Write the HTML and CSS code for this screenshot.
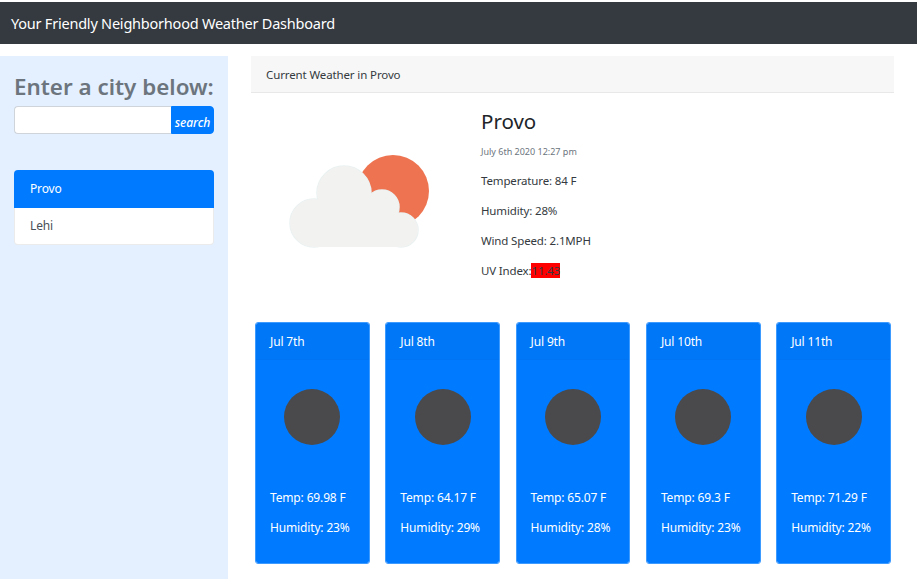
FILE: index.html
```html
<!DOCTYPE html>
<html>
<head lang="en">
    <meta charset="UTF-8">
    <title>Weather Dashboard</title>
    <link rel="stylesheet" href="styles.css">
</head>
<body>
    <nav class="navbar">Your Friendly Neighborhood Weather Dashboard</nav>
    <div class="page">
        <aside class="sidebar">
            <h2 class="search-title">Enter a city below:</h2>
            <form class="search">
                <input type="text" class="search-input">
                <button type="button" class="search-btn">search</button>
            </form>
            <ul class="cities">
                <li class="active">Provo</li>
                <li>Lehi</li>
            </ul>
        </aside>
        <main class="main">
            <div class="current-header">Current Weather in Provo</div>
            <section class="current">
                <div class="current-icon">
                    <svg width="230" height="200" viewBox="251 93 230 200">
                        <circle cx="393" cy="191" r="36" fill="#ee7350"/>
                        <g fill="#f2f2f1" stroke="#e9f1f1" stroke-width="1.5">
                            <circle cx="344" cy="193" r="27"/>
                            <circle cx="382" cy="207" r="17"/>
                            <circle cx="401" cy="230" r="17"/>
                            <circle cx="314" cy="223" r="24"/>
                        </g>
                        <g fill="#f2f2f1">
                            <circle cx="344" cy="193" r="27"/>
                            <circle cx="382" cy="207" r="17"/>
                            <circle cx="401" cy="230" r="17"/>
                            <circle cx="314" cy="223" r="24"/>
                            <rect x="314" y="215" width="87" height="32"/>
                            <rect x="340" y="205" width="45" height="20"/>
                        </g>
                    </svg>
                </div>
                <div class="current-info">
                    <h3 class="city">Provo</h3>
                    <p class="date">July 6th 2020 12:27 pm</p>
                    <p>Temperature: 84 F</p>
                    <p>Humidity: 28%</p>
                    <p>Wind Speed: 2.1MPH</p>
                    <p>UV Index:<span class="uv">11.43</span></p>
                </div>
            </section>
            <section class="forecast">
                <div class="day">
                    <div class="day-header">Jul 7th</div>
                    <div class="day-body">
                        <div class="dot"></div>
                        <p>Temp: 69.98 F</p>
                        <p>Humidity: 23%</p>
                    </div>
                </div>
                <div class="day">
                    <div class="day-header">Jul 8th</div>
                    <div class="day-body">
                        <div class="dot"></div>
                        <p>Temp: 64.17 F</p>
                        <p>Humidity: 29%</p>
                    </div>
                </div>
                <div class="day">
                    <div class="day-header">Jul 9th</div>
                    <div class="day-body">
                        <div class="dot"></div>
                        <p>Temp: 65.07 F</p>
                        <p>Humidity: 28%</p>
                    </div>
                </div>
                <div class="day">
                    <div class="day-header">Jul 10th</div>
                    <div class="day-body">
                        <div class="dot"></div>
                        <p>Temp: 69.3 F</p>
                        <p>Humidity: 23%</p>
                    </div>
                </div>
                <div class="day">
                    <div class="day-header">Jul 11th</div>
                    <div class="day-body">
                        <div class="dot"></div>
                        <p>Temp: 71.29 F</p>
                        <p>Humidity: 22%</p>
                    </div>
                </div>
            </section>
        </main>
    </div>
</body>
</html>
```

FILE: styles.css
```css
*{
    margin: 0;
    padding: 0;
    box-sizing: border-box;
}
ul{
    list-style: none;
}
html,body{
    height: 100%;
    overflow: hidden;
}
body{
    font-family: "Noto Sans", sans-serif;
    font-size: 12px;
    line-height: 18px;
    letter-spacing: -0.15px;
    color: #212529;
    background: #fff;
    padding-top: 2px;
}
.navbar{
    height: 42px;
    background: #343a40;
    color: #fff;
    font-size: 14.5px;
    letter-spacing: -0.22px;
    line-height: 42px;
    padding-left: 11px;
}
.page{
    display: flex;
    margin-top: 12px;
}
.sidebar{
    width: 228px;
    height: 523px;
    background: #e4f0ff;
    padding: 16px 14px 0;
}
.search-title{
    font-size: 22.4px;
    line-height: 30px;
    font-weight: 600;
    letter-spacing: 0;
    color: #6c757d;
    white-space: nowrap;
}
.search{
    display: flex;
    width: 200px;
    height: 28px;
    margin-top: 4px;
}
.search-input{
    flex: 1;
    min-width: 0;
    border: 1px solid #ced4da;
    border-right: 0;
    border-radius: 4px 0 0 4px;
    background: #fff;
}
.search-btn{
    width: 43px;
    padding-top: 4px;
    border: 1px solid #007bff;
    border-radius: 0 4px 4px 0;
    background: #007bff;
    color: #fff;
    font-family: "Noto Sans", sans-serif;
    font-size: 12px;
    font-style: italic;
    font-weight: 500;
}
.cities{
    width: 200px;
    margin-top: 36px;
    background: #fff;
    border: 1px solid rgba(0,0,0,.08);
    border-radius: 4px;
}
.cities li{
    height: 36px;
    line-height: 36px;
    padding-left: 15px;
    color: #495057;
}
.cities li.active{
    height: 38px;
    line-height: 38px;
    margin: -1px -1px 0;
    padding-left: 16px;
    background: #007bff;
    color: #fff;
    border-radius: 4px 4px 0 0;
}
.main{
    width: 643px;
    margin-left: 23px;
}
.current-header{
    height: 37px;
    line-height: 37px;
    padding-left: 15px;
    font-size: 11.5px;
    letter-spacing: -0.12px;
    color: #343a40;
    background: #f7f7f7;
    border-bottom: 1px solid #e8e8e8;
}
.current{
    display: flex;
    height: 229px;
}
.current-icon{
    width: 230px;
}
.current-icon svg{
    display: block;
}
.current-info{
    padding-top: 14px;
    font-size: 11.5px;
    letter-spacing: -0.15px;
    color: #343a40;
}
.city{
    font-size: 20.5px;
    line-height: 28px;
    font-weight: 400;
    letter-spacing: 0;
    color: #212529;
}
.date{
    font-size: 9px;
    line-height: 14px;
    letter-spacing: 0;
    color: #6c757d;
    margin-top: 10px;
}
.current-info p:not(.date){
    margin-top: 12px;
}
.current-info .date + p{
    margin-top: 13px;
}
.uv{
    background: #ff0000;
}
.forecast{
    display: flex;
    gap: 15.5px;
    padding: 0 3px 0 4px;
}
.day{
    flex: 1;
    height: 242px;
    background: #007bff;
    color: #fff;
    border: 1px solid #3d9aff;
    background-clip: padding-box;
    border-radius: 3px;
}
.day-header{
    height: 37px;
    line-height: 37px;
    padding-left: 14px;
    background: rgba(0,0,0,.03);
    border-bottom: 1px solid rgba(0,0,0,.02);
}
.day-body{
    padding: 29px 14px 0;
}
.dot{
    width: 56px;
    height: 56px;
    margin: 0 auto 44px;
    border-radius: 50%;
    background: #4a4a4c;
}
.day-body p{
    margin-bottom: 12px;
}
```
